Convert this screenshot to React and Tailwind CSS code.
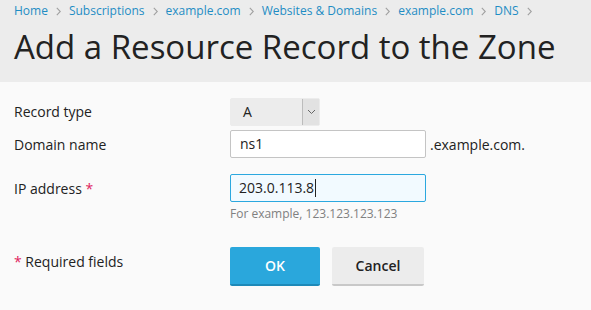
import React from 'react';

const crumbs = ['Home', 'Subscriptions', 'example.com', 'Websites & Domains', 'example.com', 'DNS'];

const Chevron = () => (
  <svg width="5" height="9" viewBox="0 0 5 9" className="mx-[8px] shrink-0">
    <path d="M0.8 0.8l3.5 3.7-3.5 3.7" fill="none" stroke="#a0a0a0" strokeWidth="1.1" />
  </svg>
);

const App = () => {
  return (
    <div className="w-[591px] h-[310px] bg-[#fafafa] font-['Open_Sans',sans-serif] text-[#222] overflow-hidden">
      <div className="bg-[#ececec] h-[82px] px-[14px] pt-[1px]">
        <div className="flex items-center whitespace-nowrap text-[12px] leading-[20px] text-[#1f8dc4]">
          {crumbs.map((c, i) => (
            <React.Fragment key={i}>
              <span>{c}</span>
              <Chevron />
            </React.Fragment>
          ))}
        </div>
        <h1 className="text-[33px] leading-[44px] mt-[4px] text-[#222] whitespace-nowrap">
          Add a Resource Record to the Zone
        </h1>
      </div>

      <div className="px-[14px] pt-[15px] text-[14px]">
        <div className="flex items-center h-[29px]">
          <div className="w-[216px]">Record type</div>
          <div className="flex w-[90px] h-[28px] bg-[#ececec] border border-[#ececec] rounded-[2px]">
            <span className="flex-1 pl-[12px] leading-[26px]">A</span>
            <span className="w-[17px] flex items-center justify-center bg-[#e2e2e2] border-l border-[#bcbcbc]">
              <svg width="9" height="6" viewBox="0 0 9 6">
                <path d="M1 1l3.5 3.5L8 1" fill="none" stroke="#666" strokeWidth="1" />
              </svg>
            </span>
          </div>
        </div>

        <div className="flex items-center mt-[4px] h-[28px]">
          <div className="w-[216px]">Domain name</div>
          <div className="w-[196px] h-[28px] bg-white border border-[#c4c4c4] rounded-[2px] pl-[9px] leading-[26px]">ns1</div>
          <span className="ml-[4px]">.example.com.</span>
        </div>

        <div className="flex items-center mt-[16px] h-[28px]">
          <div className="w-[216px]">
            IP address <span className="text-[#e0245e]">*</span>
          </div>
          <div className="w-[196px] h-[28px] bg-[#f2faff] border border-[#2ba8df] rounded-[2px] pl-[8px] leading-[26px] flex items-center">
            <span>203.0.113.8</span>
            <span className="w-px h-[18px] bg-[#222] ml-[1px]" />
          </div>
        </div>
        <div className="ml-[216px] mt-[2px] text-[12px] leading-[20px] text-[#808080]">For example, 123.123.123.123</div>

        <div className="flex mt-[23px]">
          <div className="w-[216px] pt-[4px]">
            <span className="text-[#e0245e]">*</span> Required fields
          </div>
          <button className="w-[90px] h-[39px] bg-[#2aa7dc] border-b-2 border-[#1d89b8] rounded-[2px] text-white font-semibold text-[14px]">
            OK
          </button>
          <button className="w-[92px] h-[39px] ml-[12px] bg-[#ececec] border-b-2 border-[#c8c8c8] rounded-[2px] text-[#222] font-semibold text-[14px]">
            Cancel
          </button>
        </div>
      </div>
    </div>
  );
};

export default App;
